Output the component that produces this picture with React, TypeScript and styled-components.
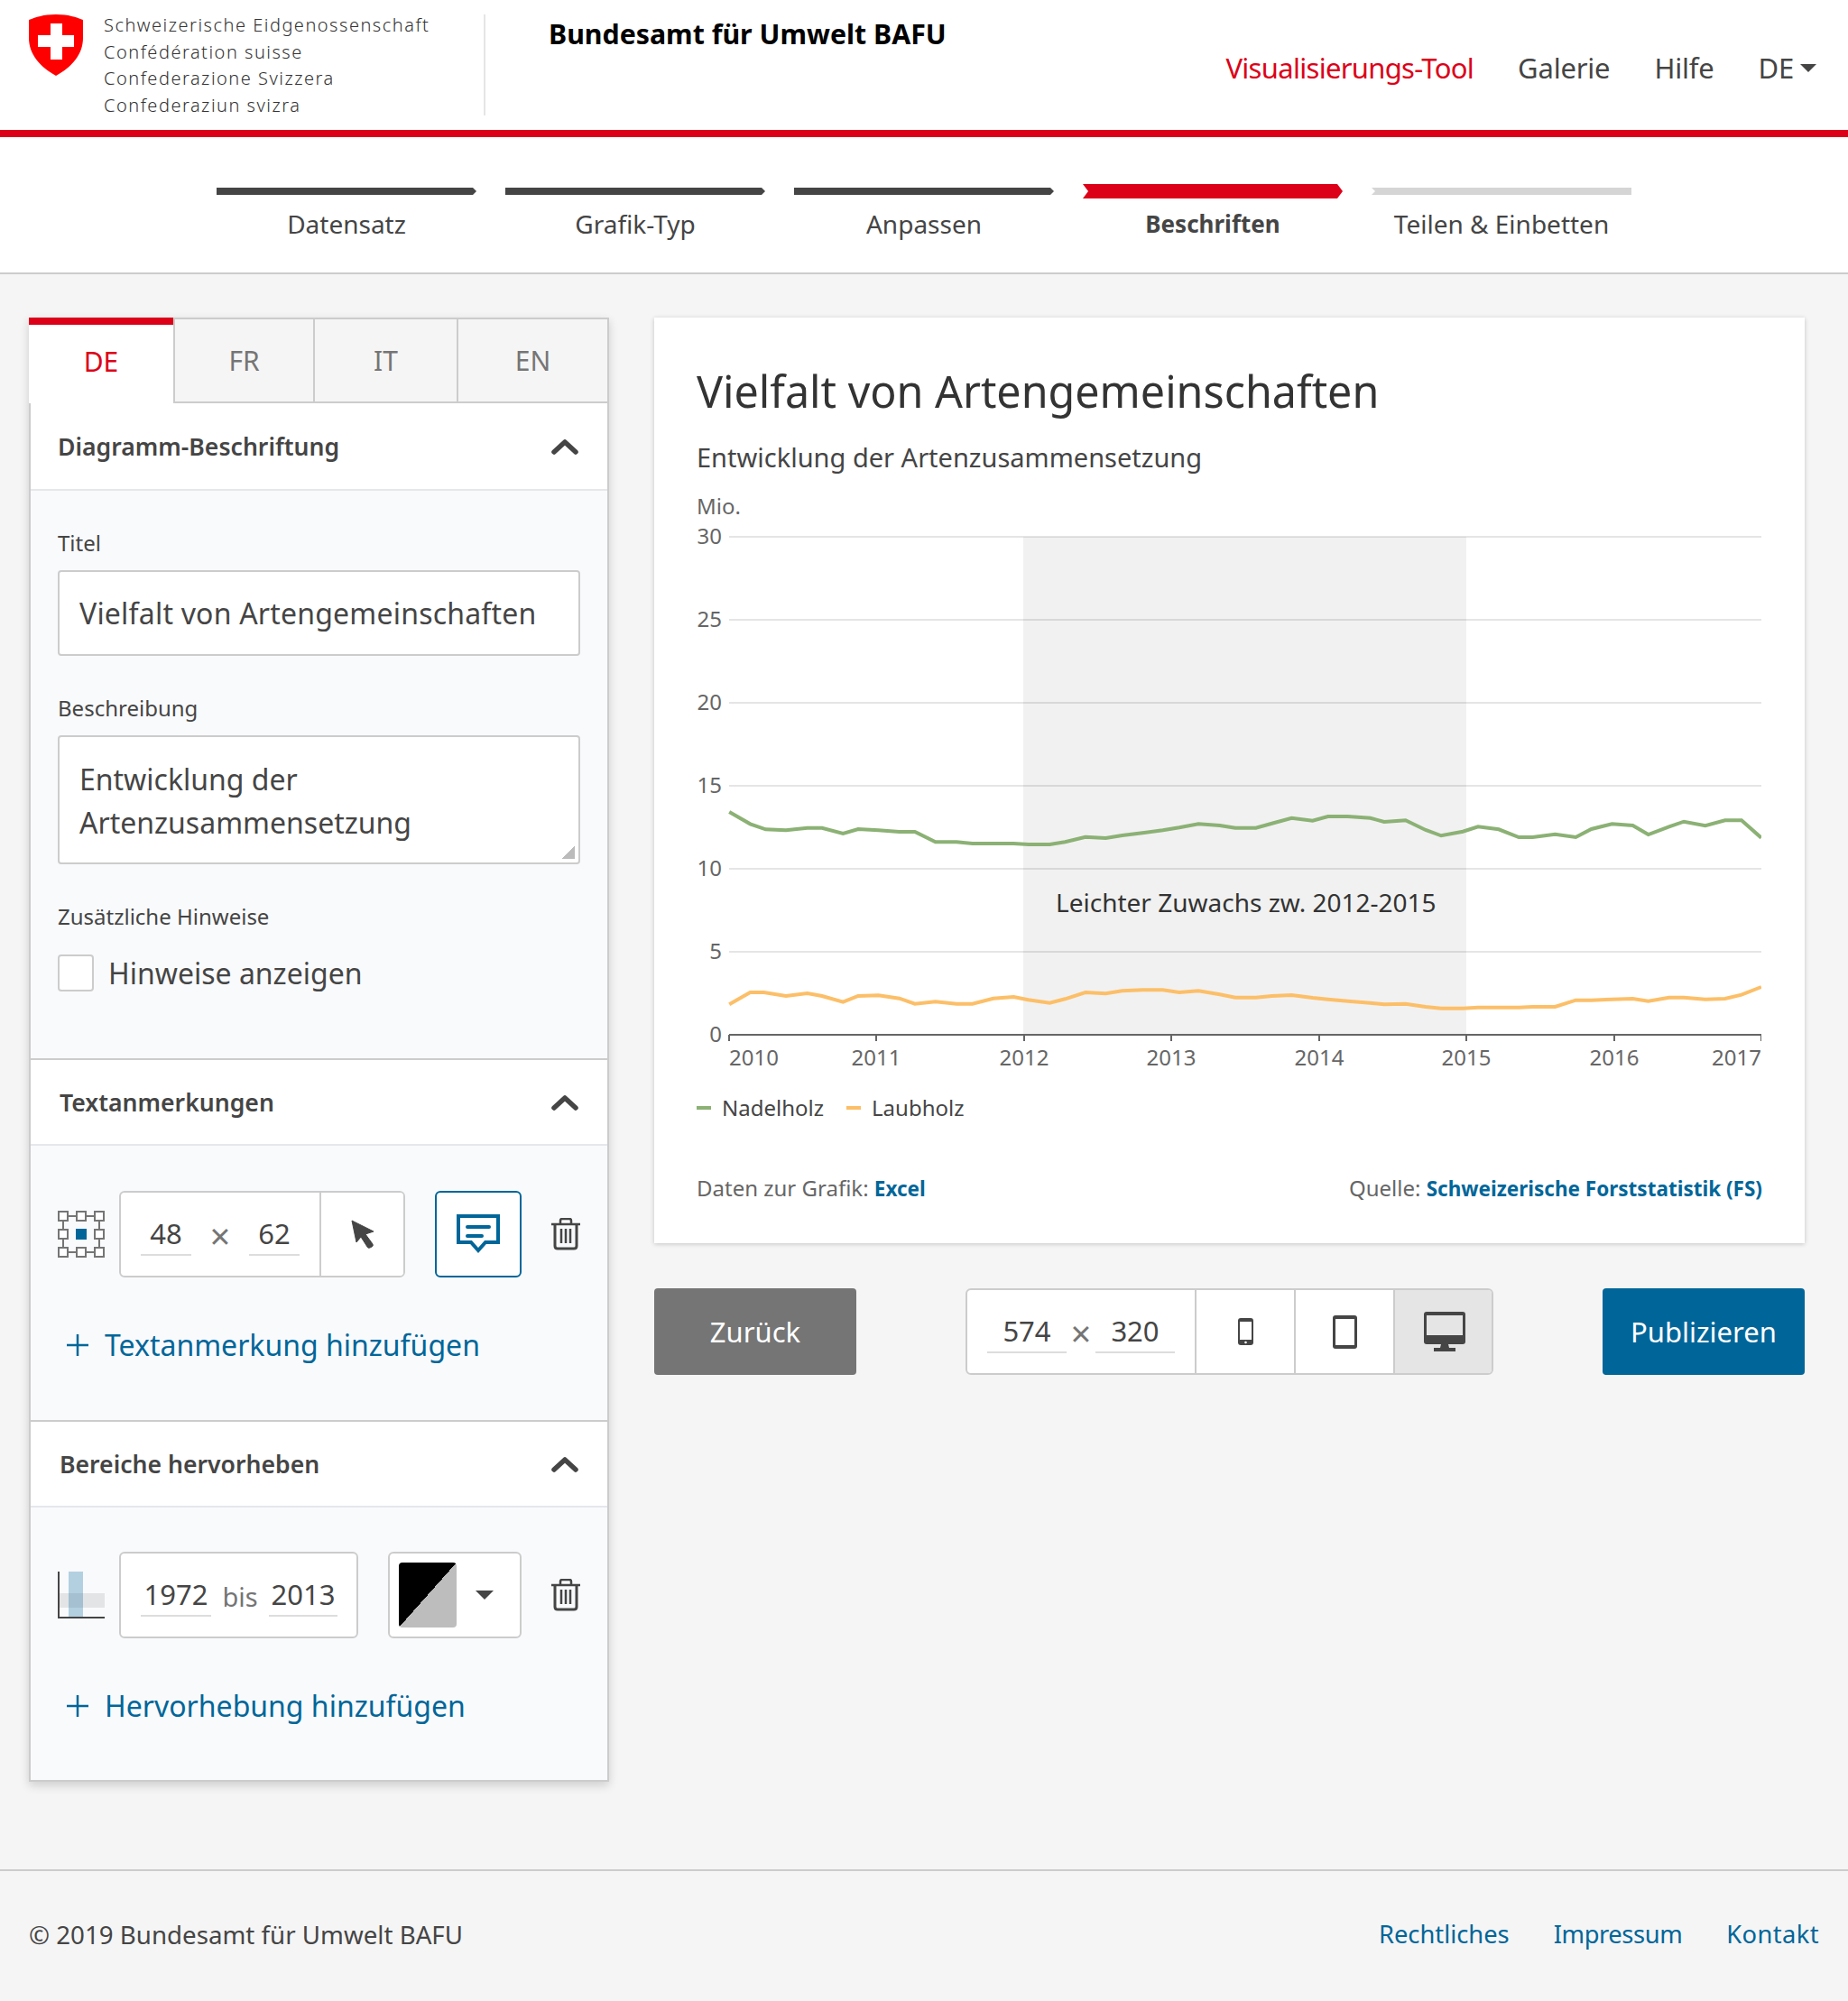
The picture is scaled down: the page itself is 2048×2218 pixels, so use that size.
import { createGlobalStyle } from 'styled-components';
import styled from 'styled-components';

const GlobalStyle = createGlobalStyle`
    * { box-sizing: border-box; }
    body {
        margin: 0;
        background: #f5f5f5;
        color: #454545;
        font-family: "Noto Sans", "Open Sans", sans-serif;
    }
`

const Header = styled.header`
    display: flex;
    height: 152px;
    background: #fff;
    border-bottom: 8px solid #dc0018;
`

const Logo = styled.div`
    display: flex;
    width: 538px;
    height: 112px;
    margin-top: 16px;
    padding-left: 32px;
    border-right: 2px solid #e5e5e5;
    svg { flex-shrink: 0; }
`

const LogoText = styled.div`
    margin: -3px 0 0 23px;
    font-size: 20px;
    line-height: 29.5px;
    letter-spacing: 1.5px;
    color: #333;
    font-weight: 300;
    white-space: nowrap;
`

const Office = styled.div`
    margin: 17px 0 0 70px;
    font-size: 30.3px;
    line-height: 42px;
    font-weight: 700;
    color: #000;
`

const Nav = styled.nav`
    display: flex;
    gap: 49px;
    height: 44px;
    margin: 53px 35px 0 auto;
    font-size: 31px;
    line-height: 44px;
`

const NavItem = styled.a<{ $active?: boolean }>`
    display: flex;
    align-items: center;
    gap: 7px;
    color: ${({ $active }) => ($active ? '#dc0018' : '#454545')};
    letter-spacing: ${({ $active }) => ($active ? '-0.7px' : '-0.2px')};
`

const Caret = styled.span<{ $size?: number }>`
    width: 0;
    height: 0;
    border-left: ${({ $size = 9 }) => $size}px solid transparent;
    border-right: ${({ $size = 9 }) => $size}px solid transparent;
    border-top: ${({ $size = 9 }) => $size}px solid #454545;
`

const StepsBar = styled.div`
    display: flex;
    justify-content: center;
    gap: 32px;
    height: 152px;
    padding-top: 52px;
    background: #fff;
    border-bottom: 2px solid #ccc;
`

const Step = styled.div`
    width: 288px;
    text-align: center;
`

const StepTrack = styled.div`
    display: flex;
    align-items: center;
    height: 16px;
`

const clips = {
    first: 'polygon(0 0, calc(100% - 4px) 0, 100% 50%, calc(100% - 4px) 100%, 0 100%)',
    active: 'polygon(0 0, calc(100% - 6px) 0, 100% 50%, calc(100% - 6px) 100%, 0 100%, 6px 50%)',
    last: 'polygon(0 0, 100% 0, 100% 100%, 0 100%, 4px 50%)',
}

const StepLine = styled.div<{ $state: 'done' | 'active' | 'todo' }>`
    width: 100%;
    height: ${({ $state }) => ($state === 'active' ? 16 : 8)}px;
    background: ${({ $state }) => ($state === 'active' ? '#dc0018' : $state === 'done' ? '#454545' : '#d5d5d5')};
    clip-path: ${({ $state }) => ($state === 'active' ? clips.active : $state === 'done' ? clips.first : clips.last)};
`

const StepLabel = styled.div<{ $active?: boolean }>`
    margin-top: 9px;
    font-size: ${({ $active }) => ($active ? 26 : 28)}px;
    line-height: 38px;
    font-weight: ${({ $active }) => ($active ? 700 : 400)};
`

const Main = styled.main`
    display: grid;
    grid-template-columns: 643px 1275px;
    column-gap: 50px;
    align-items: start;
    padding: 48px 0 97px 32px;
`

const Panel = styled.section`
    background: #fff;
    border: 2px solid #ccc;
    border-top: 0;
    box-shadow: 0 4px 10px rgba(0, 0, 0, 0.16);
`

const Tabs = styled.div`
    display: grid;
    grid-template-columns: 160px 157px 159px 167px;
    margin: 0 -2px;
`

const Tab = styled.div<{ $active?: boolean }>`
    height: 95px;
    text-align: center;
    font-size: 30px;
    line-height: ${({ $active }) => ($active ? '82px' : '91px')};
    ${({ $active }) => $active
        ? 'border-top: 8px solid #dc0018; color: #dc0018; background: #fff;'
        : 'border: 2px solid #ccc; border-left: 0; color: #757575; background: #f5f5f5;'}
    &:nth-child(2) { border-left: 2px solid #ccc; }
`

const AccordionHeader = styled.div<{ $first?: boolean }>`
    display: flex;
    align-items: center;
    justify-content: space-between;
    height: ${({ $first }) => ($first ? 97 : 95)}px;
    padding: 0 32px 0 ${({ $first }) => ($first ? 30 : 32)}px;
    background: #fff;
    border-bottom: 2px solid #e5e7eb;
    font-size: 26.6px;
    font-weight: 600;
`

const AccordionBody = styled.div<{ $pad: string; $last?: boolean }>`
    padding: ${({ $pad }) => $pad};
    background: #f9fafc;
    border-bottom: ${({ $last }) => ($last ? 'none' : '2px solid #ccc')};
`

const FieldLabel = styled.label<{ $plain?: boolean }>`
    display: block;
    margin-bottom: ${({ $plain }) => ($plain ? 0 : 14)}px;
    font-size: 24px;
    line-height: 32px;
`

const TextField = styled.input`
    display: block;
    width: 100%;
    height: 95px;
    margin-bottom: 42px;
    padding: 0 22px;
    border: 2px solid #ccc;
    border-radius: 4px;
    background: #fff;
    color: #454545;
    font: 400 32px "Noto Sans", sans-serif;
    letter-spacing: 0.2px;
    outline: none;
`

const TextArea = styled.textarea`
    display: block;
    width: 100%;
    height: 143px;
    margin-bottom: 42px;
    padding: 23px 22px 0;
    border: 2px solid #ccc;
    border-radius: 4px;
    background: linear-gradient(135deg, transparent 50%, #bbb 50%) no-repeat right 4px bottom 4px / 15px 15px #fff;
    color: #454545;
    font: 400 32px/48px "Noto Sans", sans-serif;
    outline: none;
    resize: none;
    overflow: hidden;
`

const CheckRow = styled.div`
    display: flex;
    align-items: center;
    gap: 16px;
    margin-top: 26px;
    font-size: 32px;
    line-height: 41px;
`

const Checkbox = styled.span`
    width: 40px;
    height: 41px;
    border: 2px solid #ccc;
    border-radius: 4px;
    background: #fff;
`

const Row = styled.div`
    display: flex;
    align-items: center;
    height: 96px;
    & > * { flex-shrink: 0; }
    & > * + * { margin-left: 33px; }
    & > svg:first-child + * { margin-left: 16px; }
`

const Group = styled.div<{ $width: number }>`
    display: flex;
    align-items: center;
    width: ${({ $width }) => $width}px;
    height: 96px;
    padding-left: 22px;
    border: 2px solid #ccc;
    border-radius: 6px;
    background: #fff;
    overflow: hidden;
`

const Coord = styled.div<{ $width: number }>`
    width: ${({ $width }) => $width}px;
    height: 46px;
    flex-shrink: 0;
    margin: 4px 0 2px;
    border-bottom: 2px solid #ddd;
    text-align: center;
    font-size: 31px;
    line-height: 42px;
`

const Times = styled.span<{ $width: number }>`
    width: ${({ $width }) => $width}px;
    flex-shrink: 0;
    text-align: center;
    color: #757575;
    font-size: 40px;
    line-height: 44px;
    margin-top: 4px;
`

const Until = styled(Times)`
    font-size: 29px;
`

const GroupCell = styled.div<{ $width: number; $first?: boolean; $selected?: boolean }>`
    display: flex;
    align-items: center;
    justify-content: center;
    width: ${({ $width }) => $width}px;
    height: 100%;
    flex-shrink: 0;
    margin-left: ${({ $first }) => ($first ? 22 : 0)}px;
    border-left: 2px solid #ccc;
    background: ${({ $selected }) => ($selected ? '#e5e5e5' : '#fff')};
`

const IconButton = styled.div`
    display: flex;
    align-items: center;
    justify-content: center;
    width: 96px;
    height: 96px;
    border: 2px solid #006699;
    border-radius: 6px;
    background: #fff;
`

const ColorSelect = styled.div`
    display: flex;
    align-items: center;
    gap: 21px;
    width: 148px;
    height: 96px;
    padding-left: 10px;
    border: 2px solid #ccc;
    border-radius: 6px;
    background: #fff;
`

const Swatch = styled.span`
    width: 64px;
    height: 72px;
    border-radius: 4px;
    background: linear-gradient(to bottom right, #000 50%, #bdbdbd 50%);
`

const AddLink = styled.a`
    display: flex;
    align-items: center;
    gap: 18px;
    margin: 52px 0 0 10px;
    color: #006699;
    font-size: 32px;
    line-height: 46px;
    padding-bottom: 2px;
`

const Right = styled.div`
    min-width: 0;
`

const Card = styled.article`
    height: 1026px;
    padding: 48px 47px 0;
    background: #fff;
    box-shadow: 0 1px 5px rgba(0, 0, 0, 0.2);
`

const ChartTitle = styled.h1`
    margin: 0;
    font-size: 48.4px;
    line-height: 66px;
    font-weight: 400;
    color: #333;
`

const ChartSubtitle = styled.p`
    margin: 20px 0 0;
    font-size: 29px;
    line-height: 42px;
`

const ChartSvg = styled.svg`
    display: block;
    margin-top: 17px;
    text {
        font-family: "Noto Sans", sans-serif;
    }
`

const Legend = styled.div`
    display: flex;
    gap: 25px;
    margin-top: 21px;
    font-size: 24px;
    line-height: 34px;
`

const LegendItem = styled.span<{ $color: string }>`
    display: flex;
    align-items: center;
    gap: 12px;
    &::before {
        content: "";
        width: 16px;
        height: 4px;
        background: ${({ $color }) => $color};
    }
`

const CardFooter = styled.div`
    display: flex;
    justify-content: space-between;
    margin-top: 55px;
    font-size: 24px;
    line-height: 34px;
    color: #666;
    a {
        color: #006699;
        font-size: 22.5px;
        font-weight: 700;
    }
`

const Actions = styled.div`
    display: flex;
    align-items: center;
    justify-content: space-between;
    margin-top: 50px;
`

const ActionButton = styled.button<{ $primary?: boolean }>`
    width: 224px;
    height: 96px;
    border: 0;
    border-radius: 4px;
    background: ${({ $primary }) => ($primary ? '#006699' : '#757575')};
    color: #fff;
    font: 400 31px "Noto Sans", sans-serif;
`

const Footer = styled.footer`
    display: flex;
    align-items: center;
    justify-content: space-between;
    height: 146px;
    padding: 0 32px 5px;
    border-top: 2px solid #ccc;
    font-size: 27.7px;
`

const FooterLinks = styled.div`
    display: flex;
    gap: 49px;
    font-size: 27.3px;
    a { color: #006699; }
    a:nth-child(2) { letter-spacing: -0.4px; }
    a:nth-child(3) { letter-spacing: 0.4px; }
`

const Shield = () => (
    <svg width="60" height="68" viewBox="0 0 60 68">
        <path d="M0 6 C8 3 16 0 30 0 C44 0 52 3 60 6 V26 C60 44 48 58 30 68 C12 58 0 44 0 26 Z" fill="#f00" />
        <path d="M24 10H37V23H50V36H37V50H24V36H10V23H24Z" fill="#fff" />
    </svg>
)

const Chevron = () => (
    <svg width="30" height="18" viewBox="0 0 30 18">
        <path d="M3 15L15 4L27 15" fill="none" stroke="#454545" strokeWidth="5.5" strokeLinecap="round" strokeLinejoin="round" />
    </svg>
)

const Plus = () => (
    <svg width="24" height="24" viewBox="0 0 24 24">
        <path d="M12 0V24M0 12H24" stroke="#006699" strokeWidth="2.5" />
    </svg>
)

const Trash = () => (
    <svg width="32" height="36" viewBox="0 0 32 36" fill="none" stroke="#454545">
        <path d="M0 7H32" strokeWidth="2.5" />
        <path d="M10 6V3Q10 1 12 1H20Q22 1 22 3V6" strokeWidth="2.5" />
        <path d="M4 7V31Q4 34 7 34H25Q28 34 28 31V7" strokeWidth="3" />
        <path d="M11 12V28M16 12V28M21 12V28" strokeWidth="2.5" />
    </svg>
)

const AnchorIcon = () => (
    <svg width="52" height="52" viewBox="0 0 52 52" fill="#fff" stroke="#757575" strokeWidth="2">
        <path d="M6 6H46V46H6Z" fill="none" />
        {[1, 21, 41].map((x) => [1, 21, 41].map((y) => (
            x === 21 && y === 21 ? null : <rect key={`${x}-${y}`} x={x} y={y} width="10" height="10" />
        )))}
        <rect x="20" y="20" width="12" height="12" fill="#006699" stroke="none" />
    </svg>
)

const RangeIcon = () => (
    <svg width="52" height="52" viewBox="0 0 52 52">
        <rect x="1" y="24" width="51" height="16" fill="#e3e4e6" />
        <rect x="12" y="0" width="16" height="51" fill="#006699" opacity="0.28" />
        <path d="M1 0V51H52" fill="none" stroke="#454545" strokeWidth="2" />
    </svg>
)

const Cursor = () => (
    <svg width="28" height="34" viewBox="0 0 28 34">
        <path d="M2 2L26 14L17 17L25 28Q26 30 24 31L22 32Q20 33 19 31L12 20L7 26Z" fill="#454545" stroke="#454545" strokeLinejoin="round" />
    </svg>
)

const Comment = () => (
    <svg width="48" height="44" viewBox="0 0 48 44" fill="none" stroke="#006699">
        <path d="M2 2H46V31H32L24 40L16 31H2Z" strokeWidth="4" />
        <path d="M12 14H36M12 24H28" strokeWidth="4" strokeLinecap="round" />
    </svg>
)

const Phone = () => (
    <svg width="17" height="30" viewBox="0 0 17 30">
        <rect width="17" height="30" rx="3" fill="#454545" />
        <rect x="2" y="4" width="13" height="20" fill="#fff" />
        <circle cx="8.5" cy="27" r="1.3" fill="#fff" />
    </svg>
)

const Tablet = () => (
    <svg width="27" height="37" viewBox="0 0 27 37">
        <rect width="27" height="37" rx="3" fill="#454545" />
        <rect x="3" y="4" width="21" height="29" fill="#fff" />
    </svg>
)

const Desktop = () => (
    <svg width="46" height="44" viewBox="0 0 46 44">
        <rect width="46" height="36" rx="3" fill="#454545" />
        <rect x="3" y="4" width="40" height="22" fill="#e5e5e5" />
        <path d="M19 36H27L28 40H35V44H11V40H18Z" fill="#454545" />
    </svg>
)

// traced point lists, left part and right part of the chart in different grids
const leftPart = (pts: number[][]) => pts.map(([x, y]) => [760 + x / 2.45 - 772, 840 + y / 3 - 545]);
const rightPart = (pts: number[][]) => pts.map(([x, y]) => [1400 + x / 2.613 - 772, 840 + y / 3 - 545]);

const green = [
    ...leftPart([[118, 180], [175, 220], [217, 238], [272, 241], [330, 233], [370, 233], [427, 252], [468, 237], [523, 241], [580, 246], [622, 246], [678, 280], [735, 280], [778, 285], [835, 285], [890, 285], [930, 288], [988, 288], [1030, 280], [1085, 263], [1140, 267], [1185, 258], [1240, 250], [1295, 241], [1340, 232], [1392, 220], [1450, 225], [1492, 233], [1548, 233]]),
    ...rightPart([[25, 218], [82, 200], [143, 209], [187, 195], [245, 195], [310, 200], [350, 213], [412, 208], [470, 240], [515, 259], [578, 245], [622, 229], [682, 238], [740, 264], [780, 264], [845, 254], [905, 264], [950, 237], [1010, 220], [1070, 225], [1115, 255], [1175, 229], [1218, 212], [1280, 226], [1337, 208], [1385, 208], [1442, 266]]),
];

const orange = [
    ...leftPart([[118, 820], [175, 780], [212, 780], [272, 792], [330, 783], [370, 792], [427, 812], [468, 792], [523, 790], [580, 800], [622, 818], [678, 811], [735, 818], [778, 818], [835, 800], [890, 795], [930, 805], [988, 815], [1030, 802], [1085, 780], [1140, 784], [1185, 775], [1240, 772], [1295, 772], [1340, 780], [1392, 775], [1450, 787], [1492, 797], [1548, 797]]),
    ...rightPart([[25, 792], [82, 789], [143, 798], [187, 803], [245, 809], [310, 815], [350, 820], [412, 818], [470, 828], [515, 833], [578, 833], [622, 830], [682, 830], [740, 830], [780, 828], [845, 828], [905, 806], [950, 806], [1010, 803], [1070, 801], [1115, 809], [1175, 797], [1218, 797], [1280, 803], [1337, 801], [1385, 788], [1442, 762]]),
];

const toPoints = (pts: number[][]) => pts.map(([x, y]) => `${x.toFixed(1)},${y.toFixed(1)}`).join(' ');

const AXIS_LEFT = 36;
const AXIS_RIGHT = 1180;
const Y_ZERO = 602;
const yTicks = [0, 5, 10, 15, 20, 25, 30];
const xTicks = [
    { label: '2010', x: 36, anchor: 'start' },
    { label: '2011', x: 199, anchor: 'middle' },
    { label: '2012', x: 363, anchor: 'middle' },
    { label: '2013', x: 526, anchor: 'middle' },
    { label: '2014', x: 690, anchor: 'middle' },
    { label: '2015', x: 853, anchor: 'middle' },
    { label: '2016', x: 1017, anchor: 'middle' },
    { label: '2017', x: 1180, anchor: 'end' },
];

const Chart = () => (
    <ChartSvg width="1180" height="645" viewBox="0 0 1180 645">
        <text x="0" y="25" fontSize="24" fill="#666">Mio.</text>
        {yTicks.map((t) => (
            <g key={t}>
                <text x="28" y={Y_ZERO - t * 18.4 + 8} fontSize="24" fill="#666" textAnchor="end">{t}</text>
                {t > 0 && <line x1={AXIS_LEFT} x2={AXIS_RIGHT} y1={Y_ZERO - t * 18.4} y2={Y_ZERO - t * 18.4} stroke="#e5e5e5" strokeWidth="2" />}
            </g>
        ))}
        <rect x="362" y="50" width="491" height="552" fill="#000" opacity="0.055" />
        <polyline points={toPoints(green)} fill="none" stroke="#8bb174" strokeWidth="4" />
        <polyline points={toPoints(orange)} fill="none" stroke="#fcbf68" strokeWidth="4" />
        <line x1={AXIS_LEFT} x2={AXIS_RIGHT} y1={Y_ZERO} y2={Y_ZERO} stroke="#666" strokeWidth="2" />
        {xTicks.map(({ label, x, anchor }) => (
            <g key={label}>
                <line x1={x} x2={x} y1={Y_ZERO} y2={Y_ZERO + 7} stroke="#666" strokeWidth="2" />
                <text x={x} y={Y_ZERO + 34} fontSize="24" fill="#666" textAnchor={anchor}>{label}</text>
            </g>
        ))}
        <text x="398" y="466" fontSize="28" fill="#333">Leichter Zuwachs zw. 2012-2015</text>
    </ChartSvg>
)

const steps = ['Datensatz', 'Grafik-Typ', 'Anpassen', 'Beschriften', 'Teilen & Einbetten'];

export default function App() {
    return (
        <>
            <GlobalStyle />
            <Header>
                <Logo>
                    <Shield />
                    <LogoText>
                        Schweizerische Eidgenossenschaft<br />
                        Confédération suisse<br />
                        Confederazione Svizzera<br />
                        Confederaziun svizra
                    </LogoText>
                </Logo>
                <Office>Bundesamt für Umwelt BAFU</Office>
                <Nav>
                    <NavItem $active>Visualisierungs-Tool</NavItem>
                    <NavItem>Galerie</NavItem>
                    <NavItem>Hilfe</NavItem>
                    <NavItem>DE <Caret /></NavItem>
                </Nav>
            </Header>

            <StepsBar>
                {steps.map((step, index) => (
                    <Step key={step}>
                        <StepTrack>
                            <StepLine $state={index < 3 ? 'done' : index === 3 ? 'active' : 'todo'} />
                        </StepTrack>
                        <StepLabel $active={index === 3}>{step}</StepLabel>
                    </Step>
                ))}
            </StepsBar>

            <Main>
                <Panel>
                    <Tabs>
                        <Tab $active>DE</Tab>
                        <Tab>FR</Tab>
                        <Tab>IT</Tab>
                        <Tab>EN</Tab>
                    </Tabs>

                    <AccordionHeader $first>Diagramm-Beschriftung <Chevron /></AccordionHeader>
                    <AccordionBody $pad="42px 30px 74px">
                        <FieldLabel>Titel</FieldLabel>
                        <TextField readOnly value="Vielfalt von Artengemeinschaften" />
                        <FieldLabel>Beschreibung</FieldLabel>
                        <TextArea readOnly value={'Entwicklung der\nArtenzusammensetzung'} />
                        <FieldLabel as="div" $plain>Zusätzliche Hinweise</FieldLabel>
                        <CheckRow><Checkbox /> Hinweise anzeigen</CheckRow>
                    </AccordionBody>

                    <AccordionHeader>Textanmerkungen <Chevron /></AccordionHeader>
                    <AccordionBody $pad="50px 30px 58px">
                        <Row>
                            <AnchorIcon />
                            <Group $width={317}>
                                <Coord $width={56}>48</Coord>
                                <Times $width={64}>×</Times>
                                <Coord $width={56}>62</Coord>
                                <GroupCell $width={93} $first><Cursor /></GroupCell>
                            </Group>
                            <IconButton><Comment /></IconButton>
                            <Trash />
                        </Row>
                        <AddLink><Plus /> Textanmerkung hinzufügen</AddLink>
                    </AccordionBody>

                    <AccordionHeader>Bereiche hervorheben <Chevron /></AccordionHeader>
                    <AccordionBody $pad="49px 30px 57px" $last>
                        <Row>
                            <RangeIcon />
                            <Group $width={265}>
                                <Coord $width={78}>1972</Coord>
                                <Until $width={64}>bis</Until>
                                <Coord $width={76}>2013</Coord>
                            </Group>
                            <ColorSelect><Swatch /><Caret $size={10} /></ColorSelect>
                            <Trash />
                        </Row>
                        <AddLink><Plus /> Hervorhebung hinzufügen</AddLink>
                    </AccordionBody>
                </Panel>

                <Right>
                    <Card>
                        <ChartTitle>Vielfalt von Artengemeinschaften</ChartTitle>
                        <ChartSubtitle>Entwicklung der Artenzusammensetzung</ChartSubtitle>
                        <Chart />
                        <Legend>
                            <LegendItem $color="#8bb174">Nadelholz</LegendItem>
                            <LegendItem $color="#fcbf68">Laubholz</LegendItem>
                        </Legend>
                        <CardFooter>
                            <span>Daten zur Grafik: <a>Excel</a></span>
                            <span>Quelle: <a>Schweizerische Forststatistik (FS)</a></span>
                        </CardFooter>
                    </Card>
                    <Actions>
                        <ActionButton>Zurück</ActionButton>
                        <Group $width={585}>
                            <Coord $width={88}>574</Coord>
                            <Times $width={32}>×</Times>
                            <Coord $width={88}>320</Coord>
                            <GroupCell $width={110} $first><Phone /></GroupCell>
                            <GroupCell $width={110}><Tablet /></GroupCell>
                            <GroupCell $width={111} $selected><Desktop /></GroupCell>
                        </Group>
                        <ActionButton $primary>Publizieren</ActionButton>
                    </Actions>
                </Right>
            </Main>

            <Footer>
                <span>© 2019 Bundesamt für Umwelt BAFU</span>
                <FooterLinks>
                    <a>Rechtliches</a>
                    <a>Impressum</a>
                    <a>Kontakt</a>
                </FooterLinks>
            </Footer>
        </>
    )
}
